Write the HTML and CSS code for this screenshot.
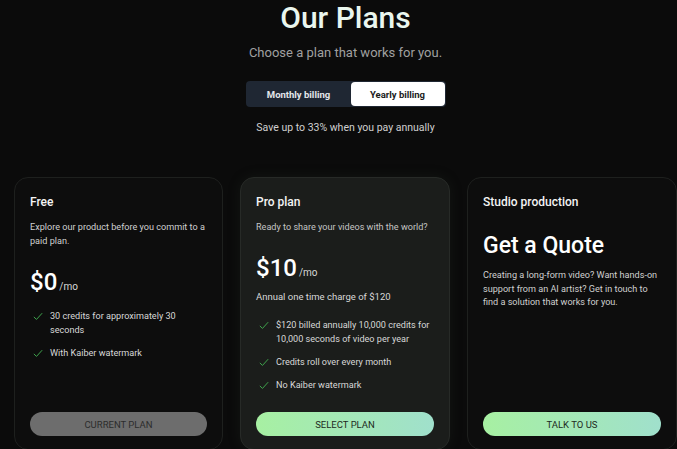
FILE: index.html
```html
<!DOCTYPE html>
<html>
<head>
<meta charset="utf-8">
<link rel="stylesheet" href="styles.css">
</head>
<body>
<main class="page">
  <header class="hero">
    <h1 class="title">Our Plans</h1>
    <p class="subtitle">Choose a plan that works for you.</p>
    <div class="toggle">
      <button class="toggle-btn">Monthly billing</button>
      <button class="toggle-btn active">Yearly billing</button>
    </div>
    <p class="save">Save up to 33% when you pay annually</p>
  </header>
  <section class="cards">
    <article class="card">
      <h2 class="card-name">Free</h2>
      <p class="card-desc">Explore our product before you commit to a paid plan.</p>
      <div class="price"><span class="amount">$0</span><span class="per">/mo</span></div>
      <ul class="features">
        <li><svg class="check" viewBox="0 0 12 10"><path d="M1 5.5 L4.2 8.5 L11 1"/></svg><span>30 credits for approximately 30 seconds</span></li>
        <li><svg class="check" viewBox="0 0 12 10"><path d="M1 5.5 L4.2 8.5 L11 1"/></svg><span>With Kaiber watermark</span></li>
      </ul>
      <button class="cta cta-muted">CURRENT PLAN</button>
    </article>
    <article class="card card-pro">
      <h2 class="card-name">Pro plan</h2>
      <p class="card-desc pro-desc">Ready to share your videos with the world?</p>
      <div class="price"><span class="amount">$10</span><span class="per">/mo</span></div>
      <p class="annual">Annual one time charge of $120</p>
      <ul class="features">
        <li><svg class="check" viewBox="0 0 12 10"><path d="M1 5.5 L4.2 8.5 L11 1"/></svg><span>$120 billed annually 10,000 credits for 10,000 seconds of video per year</span></li>
        <li><svg class="check" viewBox="0 0 12 10"><path d="M1 5.5 L4.2 8.5 L11 1"/></svg><span>Credits roll over every month</span></li>
        <li><svg class="check" viewBox="0 0 12 10"><path d="M1 5.5 L4.2 8.5 L11 1"/></svg><span>No Kaiber watermark</span></li>
      </ul>
      <button class="cta cta-green">SELECT PLAN</button>
    </article>
    <article class="card">
      <h2 class="card-name">Studio production</h2>
      <p class="quote">Get a Quote</p>
      <p class="card-desc studio-desc">Creating a long-form video? Want hands-on support from an AI artist? Get in touch to find a solution that works for you.</p>
      <button class="cta cta-green">TALK TO US</button>
    </article>
  </section>
</main>
</body>
</html>
```

FILE: styles.css
```css
* { box-sizing: border-box; }
html, body {
  margin: 0;
  padding: 0;
  background: #0b0b0b;
  height: 449px;
  overflow: hidden;
}
body {
  font-family: Roboto, "Noto Sans", sans-serif;
  color: #e6e6e6;
}
.page {
  padding: 2px 0 0 14px;
  width: 677px;
  display: flex;
  flex-direction: column;
  align-items: center;
}
.hero {
  display: flex;
  flex-direction: column;
  align-items: center;
  width: 100%;
}
.title {
  margin: 0;
  font-size: 30px;
  font-weight: 500;
  line-height: 32px;
  color: #eaf6ee;
}
.subtitle {
  margin: 10px 0 0;
  font-size: 13px;
  line-height: 18px;
  color: #a0a0a0;
}
.toggle {
  margin-top: 19px;
  display: flex;
  width: 200px;
  height: 26px;
  background: #1f2733;
  border-radius: 4px;
  padding: 1px;
}
.toggle-btn {
  flex: 1;
  border: 0;
  background: transparent;
  font-family: inherit;
  font-size: 9.5px;
  font-weight: 700;
  color: #e4e6ea;
  border-radius: 4px;
  padding: 0;
}
.toggle-btn.active {
  background: #ffffff;
  color: #1c1c1c;
  flex: 0 0 94px;
}
.save {
  margin: 14px 0 0;
  font-size: 10.5px;
  line-height: 14px;
  color: #d0d0d0;
}
.cards {
  margin-top: 42px;
  width: 100%;
  display: grid;
  grid-template-columns: 209px 210px 210px;
  gap: 17px;
}
.card {
  height: 273px;
  background: #0d0d0d;
  border: 1px solid #1e201e;
  border-radius: 14px;
  padding: 16px 15px 13px;
  display: flex;
  flex-direction: column;
}
.card-pro {
  background: #1b1d1b;
  border-color: #272a27;
  box-shadow: 0 0 14px rgba(60, 80, 60, 0.15);
}
.card-name {
  margin: 0;
  font-size: 12px;
  font-weight: 500;
  line-height: 16px;
  color: #f4f4f4;
}
.card-desc {
  margin: 10px 0 0;
  font-size: 9.1px;
  line-height: 14px;
  color: #d0d0d0;
}
.pro-desc {
  color: #c4c4c4;
}
.price {
  margin-top: 21px;
  display: flex;
  align-items: baseline;
  gap: 2px;
  line-height: 26px;
}
.amount {
  font-size: 24px;
  font-weight: 500;
  color: #ffffff;
}
.per {
  font-size: 10px;
  color: #d8d8d8;
}
.annual {
  margin: 4px 0 0;
  font-size: 9.5px;
  line-height: 14px;
  color: #d8d8d8;
}
.features {
  list-style: none;
  margin: 9px 0 0;
  padding: 0;
  display: flex;
  flex-direction: column;
  gap: 9px;
}
.annual + .features {
  margin-top: 14px;
}
.features li {
  display: flex;
  gap: 7px;
  font-size: 9.1px;
  line-height: 14px;
  color: #d8d8d8;
}
.check {
  flex: 0 0 10px;
  width: 10px;
  height: 9px;
  margin-top: 3px;
  margin-left: 3px;
  fill: none;
  stroke: #3fa34d;
  stroke-width: 1.2;
}
.quote {
  margin: 22px 0 0;
  font-size: 23px;
  font-weight: 500;
  line-height: 28px;
  color: #ffffff;
}
.studio-desc {
  margin-top: 9px;
  line-height: 13.7px;
}
.cta {
  margin-top: auto;
  height: 24px;
  border: 0;
  border-radius: 12px;
  font-family: inherit;
  font-size: 9.5px;
  color: #1d2a22;
}
.cta-muted {
  background: #6d6d6d;
  color: #2c2c2c;
}
.cta-green {
  background: linear-gradient(90deg, #a7f0a2, #a0e0cc);
}
```
